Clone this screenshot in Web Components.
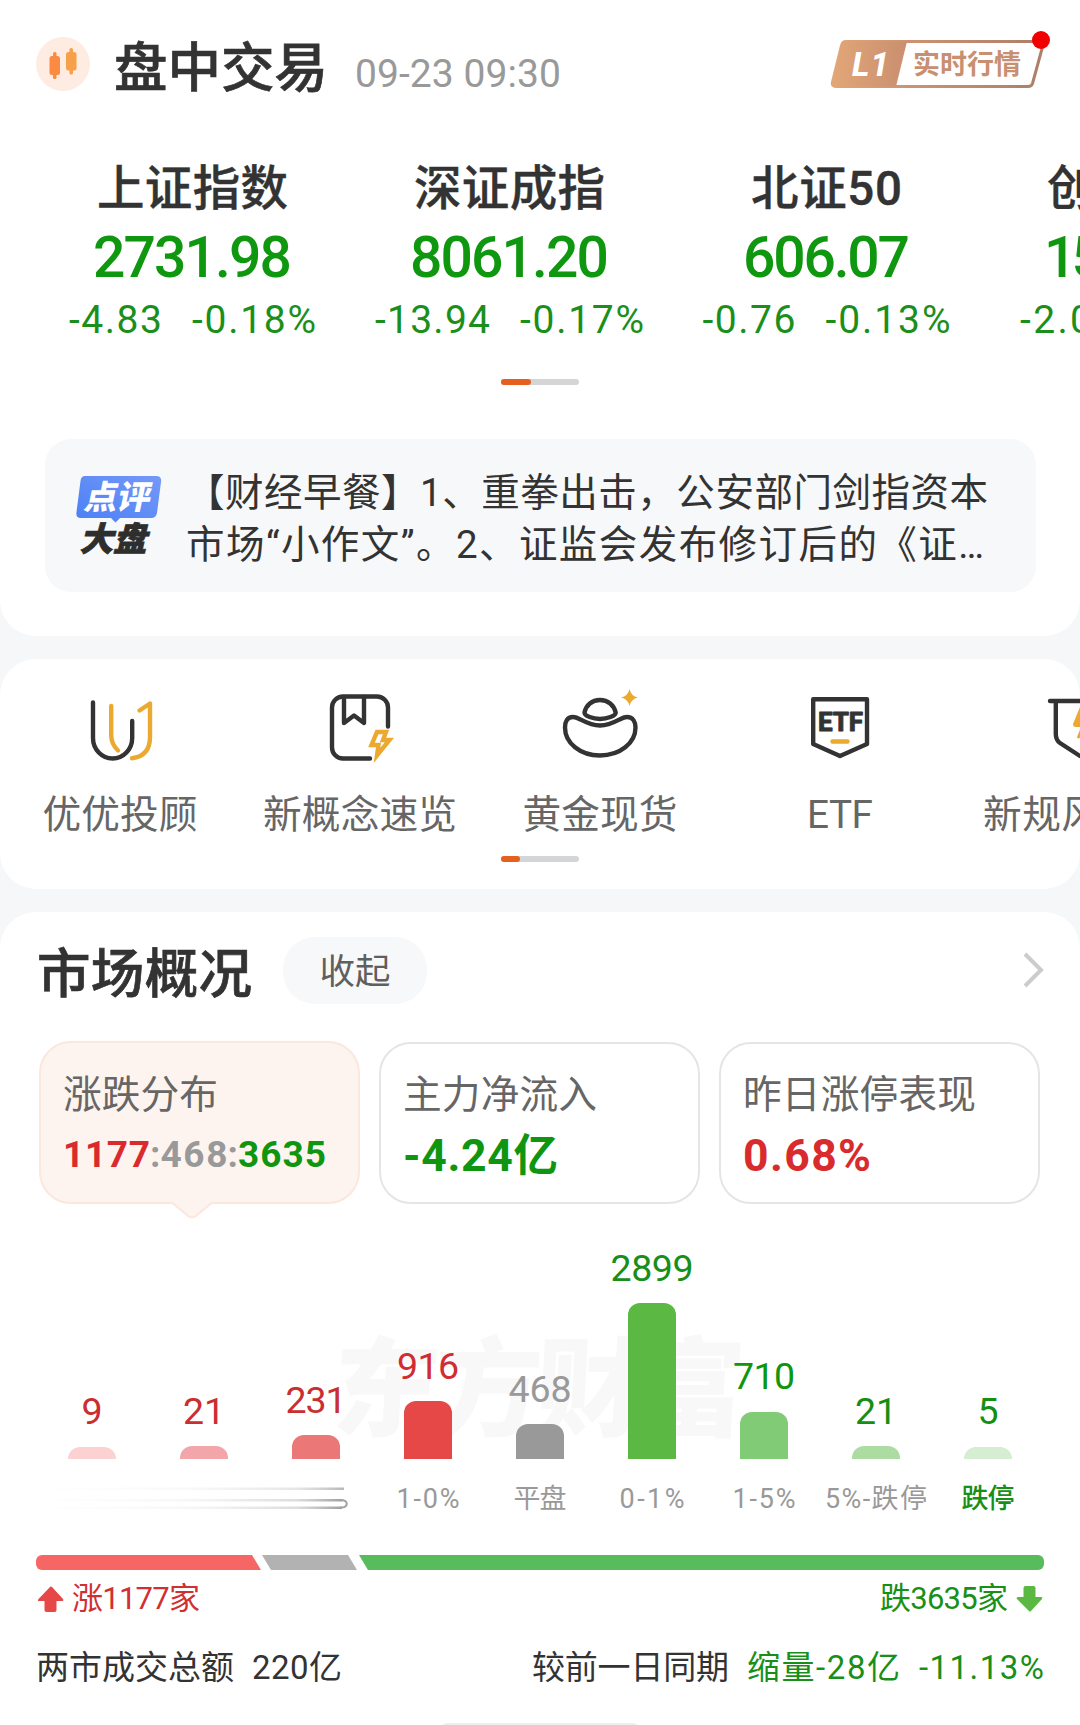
<!DOCTYPE html>
<html lang="zh-CN">
<head>
<meta charset="utf-8">
<title>盘中交易</title>
<style>
  html, body {
    margin: 0;
    padding: 0;
  }

  body {
    width: 1080px;
    height: 1725px;
    overflow: hidden;
    background: #f6f7f9;
    color: #333;
    font-family: Roboto, "Noto Sans CJK SC", sans-serif;
  }
</style>
</head>
<body>
<market-app></market-app>

<script>
// Text spread over a fixed width by letter spacing
class FitText extends HTMLElement {
  constructor() {
    super();

    this.attachShadow({ mode: 'open' });
    this.shadowRoot.innerHTML = `
      <style>
        :host { display: inline-block; white-space: nowrap; text-align: left; }
      </style>
      <slot></slot>
    `;
  }

  connectedCallback() {
    const target = Number(this.getAttribute('w'));
    const count = this.textContent.length;

    if (!target || count < 2) {
      return;
    }

    this.style.width = 'max-content';
    const natural = this.getBoundingClientRect().width;
    this.style.letterSpacing = (target - natural) / (count - 1) + 'px';
    this.style.width = target + 'px';
  }
}

class PanelCard extends HTMLElement {
  constructor() {
    super();

    this.attachShadow({ mode: 'open' });
    this.shadowRoot.innerHTML = `
      <style>
        :host {
          display: block;
          box-sizing: border-box;
          background: #fff;
          border-radius: 36px;
          overflow: hidden;
        }
      </style>
      <slot></slot>
    `;
  }
}

class LevelBadge extends HTMLElement {
  constructor() {
    super();

    this.attachShadow({ mode: 'open' });
    this.shadowRoot.innerHTML = `
      <style>
        :host { display: block; width: 222px; height: 62px; }
        svg { display: block; overflow: visible; }
        text { font-family: Roboto, "Noto Sans CJK SC", sans-serif; }
      </style>
      <svg width="222" height="62" viewBox="0 0 222 62">
        <defs>
          <linearGradient id="copper" x1="0" x2="1" y1="0" y2="0">
            <stop offset="0" stop-color="#e2a678"/>
            <stop offset=".4" stop-color="#cb9170"/>
            <stop offset="1" stop-color="#ac7f6a"/>
          </linearGradient>
          <linearGradient id="plate" x1="0" x2="1" y1="0" y2="0">
            <stop offset="0" stop-color="#e2a678"/>
            <stop offset="1" stop-color="#c98f6f"/>
          </linearGradient>
        </defs>
        <path d="M18 11.5H216L204.500 53.500Q203.500 56.500 200 56.500H8Q3.500 56.500 4.500 52L13.500 15.500Q14.500 11.500 18 11.500Z" fill="#fff" stroke="url(#copper)" stroke-width="3"/>
        <path d="M18 11.500H79L68 56.500H8Q3.500 56.500 4.500 52L13.500 15.500Q14.500 11.500 18 11.500Z" fill="url(#plate)"/>
        <text x="24" y="46" font-size="33" font-weight="800" font-style="italic" fill="#fff" textLength="37">L1</text>
        <text x="85" y="44" font-size="27" font-weight="700" fill="#c88f70" textLength="108">实时行情</text>
        <circle cx="213" cy="10" r="9" fill="#f00000"/>
      </svg>
    `;
  }
}

class MarketHeader extends HTMLElement {
  constructor() {
    super();

    this.attachShadow({ mode: 'open' });
    this.shadowRoot.innerHTML = `
      <style>
        :host {
          display: flex;
          align-items: baseline;
          height: 64px;
          padding: 37px 30px 0 36px;
        }
        .logo { align-self: flex-start; display: block; }
        .title {
          margin-left: 24px;
          font-size: 53.5px;
          line-height: 64px;
          font-weight: 500;
          -webkit-text-stroke: .7px #333;
        }
        .time {
          margin-left: 27px;
          font-size: 39px;
          color: #999;
        }
        level-badge { align-self: flex-start; margin: -7px 0 0 auto; }
      </style>
      <svg class="logo" width="54" height="54" viewBox="0 0 54 54">
        <circle cx="27" cy="27" r="27" fill="#feebe1"/>
        <g fill="#fb8b43">
          <rect x="13.500" y="19" width="10.500" height="19" rx="2.500"/>
          <rect x="17" y="15" width="3.500" height="27" rx="1.500"/>
        </g>
        <g fill="#f6a04a">
          <rect x="30" y="15" width="10.500" height="18.500" rx="2.500"/>
          <rect x="33.500" y="11" width="3.500" height="26.500" rx="1.500"/>
        </g>
      </svg>
      <fit-text class="title" w="214">盘中交易</fit-text>
      <fit-text class="time" w="206">09-23 09:30</fit-text>
      <level-badge></level-badge>
    `;
  }
}

class IndexQuote extends HTMLElement {
  constructor() {
    super();

    const w = this.getAttribute('widths').split(' ');

    this.attachShadow({ mode: 'open' });
    this.shadowRoot.innerHTML = `
      <style>
        :host {
          display: flex;
          flex: 0 0 317px;
          flex-direction: column;
          align-items: center;
        }
        :host([cut]) { align-items: flex-start; }
        .name {
          font-size: 47.5px;
          line-height: 60px;
          font-weight: 500;
          -webkit-text-stroke: .4px #333;
        }
        .price {
          margin-top: 7px;
          font-size: 57px;
          line-height: 64px;
          font-weight: 500;
          color: #0f970f;
        }
        .change {
          display: flex;
          gap: 30px;
          margin-top: 7px;
          font-size: 39px;
          line-height: 46px;
          color: #1b8f1b;
        }
        :host([cut]) .name { margin-left: 62px; }
        :host([cut]) .price { margin-left: 59px; }
        :host([cut]) .change { margin-left: 35px; }
      </style>
      <fit-text class="name" w="${w[0]}">${this.getAttribute('name')}</fit-text>
      <fit-text class="price" w="${w[1]}">${this.getAttribute('price')}</fit-text>
      <div class="change">
        <fit-text w="${w[2]}">${this.getAttribute('change')}</fit-text>
        ${w[3] ? `<fit-text w="${w[3]}">${this.getAttribute('percent')}</fit-text>` : ''}
      </div>
    `;
  }
}

class ScrollHint extends HTMLElement {
  constructor() {
    super();

    this.attachShadow({ mode: 'open' });
    this.shadowRoot.innerHTML = `
      <style>
        :host {
          display: block;
          width: 78px;
          height: 6px;
          margin: 0 auto;
          border-radius: 3px;
          background: #d3d5d7;
        }
        div {
          width: ${this.getAttribute('thumb')}px;
          height: 6px;
          border-radius: 3px;
          background: #e5601f;
        }
      </style>
      <div></div>
    `;
  }
}

class NewsCard extends HTMLElement {
  constructor() {
    super();

    this.attachShadow({ mode: 'open' });
    this.shadowRoot.innerHTML = `
      <style>
        :host {
          display: flex;
          box-sizing: border-box;
          height: 153px;
          margin: 54px 44px 0 45px;
          padding: 28px 0 0 27px;
          border-radius: 26px;
          background: #f7f8fa;
        }
        svg { display: block; margin-top: 5px; overflow: visible; }
        text { font-family: "Noto Sans CJK SC", sans-serif; font-weight: 900; }
        .lines {
          display: flex;
          flex-direction: column;
          align-items: flex-start;
          margin-left: 24px;
          font-size: 38.5px;
          line-height: 52px;
        }
      </style>
      <svg width="90" height="86" viewBox="0 0 90 86">
        <defs>
          <linearGradient id="blue" x1="0" y1="1" x2="1" y2="0">
            <stop offset="0" stop-color="#4b80f5"/>
            <stop offset="1" stop-color="#7499f8"/>
          </linearGradient>
        </defs>
        <path d="M13 4H84Q90 4 89 10L85 41Q84 46 79 46H48L43.500 50.500 39 46H9Q3.500 46 4.500 40L8.500 9Q9 4 13 4Z" fill="url(#blue)"/>
        <text transform="translate(11 37) skewX(-12)" font-size="33" fill="#fff" textLength="66">点评</text>
        <text transform="translate(7.500 79) skewX(-14)" font-size="33.500" fill="#2e2e2e" stroke="#2e2e2e" stroke-width=".8" textLength="67">大盘</text>
      </svg>
      <div class="lines">
        <fit-text w="802">【财经早餐】1、重拳出击，公安部门剑指资本</fit-text>
        <fit-text w="798">市场“小作文”。2、证监会发布修订后的《证…</fit-text>
      </div>
    `;
  }
}

class QuickEntry extends HTMLElement {
  constructor() {
    super();

    this.attachShadow({ mode: 'open' });
    this.shadowRoot.innerHTML = `
      <style>
        :host {
          display: flex;
          flex: 0 0 240px;
          flex-direction: column;
          align-items: center;
        }
        :host([cut]) .label { align-self: flex-start; margin-left: 23px; }
        .label {
          margin-top: 22px;
          font-size: 38.7px;
          line-height: 46px;
          color: #666;
        }
      </style>
      <slot></slot>
      <fit-text class="label" w="${this.getAttribute('w')}">${this.getAttribute('label')}</fit-text>
    `;
  }
}

class StatCard extends HTMLElement {
  constructor() {
    super();

    this.attachShadow({ mode: 'open' });
    this.shadowRoot.innerHTML = `
      <style>
        :host {
          display: block;
          position: relative;
          box-sizing: border-box;
          flex: 1;
          height: 162px;
          margin-top: 1px;
          padding: 28px 0 0 22px;
          border: 2px solid #e5e5e5;
          border-radius: 32px;
          font-size: 44.5px;
          line-height: 46px;
          font-weight: 700;
        }
        .label {
          display: block;
          margin-bottom: 15px;
          font-size: 38.7px;
          font-weight: 400;
          color: #666;
        }
        svg { display: none; }
        :host([active]) {
          height: 163px;
          margin-top: 0;
          padding-top: 29px;
          border-color: #fbe7dd;
          background: #fef4ef;
          font-size: 37px;
        }
        :host([active]) .label { margin-bottom: 14px; }
        :host([active]) svg {
          display: block;
          position: absolute;
          left: 129px;
          top: 159px;
        }
      </style>
      <fit-text class="label" w="${this.getAttribute('w')}">${this.getAttribute('label')}</fit-text>
      <slot></slot>
      <svg width="44" height="18" viewBox="0 0 44 18">
        <path d="M0 0L3 1 18 14Q22 17 26 14L41 1 44 0Z" fill="#fef4ef"/>
        <path d="M1 1Q3 1 5 3L18 14Q22 17 26 14L39 3Q41 1 43 1" fill="none" stroke="#fbe7dd" stroke-width="2"/>
      </svg>
    `;
  }
}

const bars = [
  { value: '9', h: 12.5, color: '#fbd1d2', text: '#c92e31', label: '' },
  { value: '21', h: 13, color: '#f3a6a9', text: '#c92e31', label: '' },
  { value: '231', w: 61, h: 24, color: '#eb7777', text: '#c92e31', label: '' },
  { value: '916', w: 62, h: 58, color: '#e64848', text: '#d12c2f', label: '1-0%', lw: 63 },
  { value: '468', w: 63, h: 35, color: '#999', text: '#999', label: '平盘', lw: 53 },
  { value: '2899', w: 83, h: 156, color: '#5bb943', text: '#188f18', label: '0-1%', lw: 65 },
  { value: '710', w: 62, h: 47.5, color: '#82cb76', text: '#0e960e', label: '1-5%', lw: 63 },
  { value: '21', h: 13, color: '#addca3', text: '#148f14', label: '5%-跌停', lw: 102 },
  { value: '5', h: 12.5, color: '#d5edd0', text: '#148f14', label: '跌停', lw: 53, hot: true }
];

class DistChart extends HTMLElement {
  constructor() {
    super();

    this.attachShadow({ mode: 'open' });
    this.shadowRoot.innerHTML = `
      <style>
        :host { display: block; position: relative; margin: 0 36px; }
        .grid { position: relative; display: grid; grid-template-columns: repeat(9, 112px); }
        .col {
          display: flex;
          flex-direction: column;
          align-items: center;
          justify-content: flex-end;
          height: 255px;
        }
        .value { margin-bottom: 17.5px; font-size: 37.5px; line-height: 36px; }
        .bar { width: 48px; border-radius: 12px 12px 0 0; }
        .axis {
          height: 34px;
          margin-top: 23px;
          text-align: center;
          font-size: 27px;
          line-height: 34px;
          color: #999;
        }
        .hot { color: #188f18; font-weight: 500; }
        .watermark, .streak { position: absolute; overflow: visible; }
        .watermark { left: 290px; top: 128px; }
        .watermark text { font-family: "Noto Sans CJK SC", sans-serif; font-weight: 900; }
        .streak { left: 0; top: 278px; }
      </style>
      <svg class="watermark" width="420" height="112">
        <text transform="translate(5 96) skewX(-3)" font-size="108" fill="#f8f8f8" textLength="412">东方财富</text>
      </svg>
      <div class="grid">
        ${bars.map(b => `
          <div class="col">
            <fit-text class="value" w="${b.w || ''}" style="color:${b.text}">${b.value}</fit-text>
            <div class="bar" style="height:${b.h}px;background:${b.color}"></div>
          </div>`).join('')}
        ${bars.map(b => `
          <div class="axis ${b.hot ? 'hot' : ''}">${b.label ? `<fit-text w="${b.lw}">${b.label}</fit-text>` : ''}</div>`).join('')}
      </div>
      <svg class="streak" width="316" height="34" viewBox="0 0 316 34">
        <defs>
          <linearGradient id="fade" x1="0" x2="1" y1="0" y2="0">
            <stop offset="0" stop-color="#ccc" stop-opacity="0"/>
            <stop offset=".5" stop-color="#bbb" stop-opacity=".12"/>
            <stop offset=".85" stop-color="#aaa" stop-opacity=".4"/>
            <stop offset="1" stop-color="#888" stop-opacity=".8"/>
          </linearGradient>
        </defs>
        <rect x="0" y="5.500" width="308" height="2.500" fill="url(#fade)" opacity=".75"/>
        <rect x="0" y="17" width="306" height="2.500" fill="url(#fade)"/>
        <rect x="0" y="24.500" width="306" height="2.500" fill="url(#fade)"/>
        <path d="M304 18C313 18 313 25.700 304 25.700" fill="none" stroke="#a2a2a2" stroke-width="2"/>
      </svg>
    `;
  }
}

class RatioBar extends HTMLElement {
  constructor() {
    super();

    this.attachShadow({ mode: 'open' });
    this.shadowRoot.innerHTML = `
      <style>
        :host { display: block; margin: 39px 36px 0; }
        .track { display: flex; height: 15px; border-radius: 6px; overflow: hidden; }
        .up { width: 225px; background: #f66664; clip-path: polygon(0 0, 216px 0, 100% 100%, 0 100%); }
        .flat { width: 95px; margin-left: 1px; background: #b2b2b2; clip-path: polygon(0 0, 86px 0, 100% 100%, 9px 100%); }
        .down { flex: 1; margin-left: 2px; background: #58bb5c; clip-path: polygon(0 0, 100% 0, 100% 100%, 9px 100%); }
        .legend {
          display: flex;
          align-items: center;
          height: 38px;
          margin-top: 10px;
          font-size: 31px;
          line-height: 38px;
        }
        .rise { margin-left: 8px; color: #cf3032; }
        .fall { margin: 0 8px 0 auto; color: #189018; }
      </style>
      <div class="track"><div class="up"></div><div class="flat"></div><div class="down"></div></div>
      <div class="legend">
        <svg width="28" height="28" viewBox="0 0 28 28"><path d="M14 2Q15 1 16 2L27 14Q28 16 26 16H20.500V25Q20.500 27 18.500 27H10.500Q8.500 27 8.500 25V16H3Q1 16 2.500 14Z" fill="#e54847"/></svg>
        <fit-text class="rise" w="128">涨1177家</fit-text>
        <fit-text class="fall" w="128">跌3635家</fit-text>
        <svg width="28" height="28" viewBox="0 0 28 28"><path d="M13 26Q14 27 15 26L26 14Q27 12 25 12H19.500V3Q19.500 1 17.500 1H9.500Q7.500 1 7.500 3V12H2Q0 12 1 14Z" fill="#5bb943"/></svg>
      </div>
    `;
  }
}

class MarketApp extends HTMLElement {
  constructor() {
    super();

    this.attachShadow({ mode: 'open' });
    this.shadowRoot.innerHTML = `
      <style>
        :host { display: flex; flex-direction: column; gap: 23px; height: 1725px; overflow: hidden; }
        panel-card { flex: none; }
        .indices { height: 636px; border-radius: 0 0 36px 36px; }
        .entries { height: 230px; }
        .overview { height: 813px; border-radius: 36px 36px 0 0; }
        .quotes { display: flex; margin: 58px 0 36px 34px; }
        .icons { display: flex; margin: 31px 0 18px; }
        .icons svg { display: block; overflow: visible; fill: none; stroke: #333; stroke-width: 4.4; stroke-linecap: round; stroke-linejoin: round; }
        .icons .gold { stroke: #eba92f; }
        .icons .fill { fill: #eba92f; stroke: none; }
        .icons text { fill: #333; stroke: #333; stroke-width: .8; font-family: Roboto, sans-serif; font-weight: 800; font-size: 26px; }
        .head { display: flex; height: 67px; padding: 25px 36px 0 37px; }
        .head .title {
          padding-top: 4px;
          font-size: 53.5px;
          line-height: 67px;
          font-weight: 500;
          -webkit-text-stroke: .7px #333;
        }
        .fold {
          width: 144px;
          height: 67px;
          margin-left: 31px;
          border-radius: 32px;
          background: #f7f8fa;
          text-align: center;
          font-size: 35.5px;
          line-height: 71px;
          color: #5f5f5f;
        }
        .head svg { margin: 14px 0 0 auto; }
        .stats { display: flex; gap: 19px; margin: 37px 40px 0 39px; height: 163px; }
        .score { display: flex; }
        .red { color: #d92b2d; }
        .gray { color: #999; }
        .green { color: #109510; }
        .totals { display: flex; margin: 29px 36px 0 36px; font-size: 33px; line-height: 42px; }
        .totals .green { color: #188f18; }
        .home { width: 198px; height: 6px; margin: 34px auto 0; border-radius: 6px 6px 0 0; background: #eee; }
      </style>

      <panel-card class="indices">
        <market-header></market-header>
        <div class="quotes">
          <index-quote name="上证指数" price="2731.98" change="-4.83" percent="-0.18%" widths="191 199 93 124"></index-quote>
          <index-quote name="深证成指" price="8061.20" change="-13.94" percent="-0.17%" widths="191 199 115 124"></index-quote>
          <index-quote name="北证50" price="606.07" change="-0.76" percent="-0.13%" widths="151 167 93 125"></index-quote>
          <index-quote cut name="创" price="15" change="-2.0" widths="48 60 72"></index-quote>
        </div>
        <scroll-hint thumb="30"></scroll-hint>
        <news-card></news-card>
      </panel-card>

      <panel-card class="entries">
        <div class="icons">
          <quick-entry label="优优投顾" w="155">
            <svg width="80" height="80" viewBox="0 0 80 80">
              <path d="M13 12.500V48a19.600 20.500 0 0 0 39.200 0V31"/>
              <path class="gold" d="M31.200 16V45Q31.200 54 38 60.500M59.500 20.500L70 13.500V47Q70 66 52 68.300"/>
            </svg>
          </quick-entry>
          <quick-entry label="新概念速览" w="194">
            <svg width="80" height="80" viewBox="0 0 80 80">
              <path d="M68 36.500V17.500a11 11 0 0 0-11-11H23a11 11 0 0 0-11 11V57.500a11 11 0 0 0 11 11H50"/>
              <path d="M24 7V33L34 25.500 44 33V7"/>
              <path class="gold" stroke-linejoin="miter" d="M57 42H66L63 50H69.500L57 65.500 58.500 55H51.500Z"/>
            </svg>
          </quick-entry>
          <quick-entry label="黄金现货" w="155">
            <svg width="80" height="80" viewBox="0 0 80 80">
              <path d="M40 35.500C26 35.500 20 27 13 27C7 27 5 32 5 37.500C5 53 20 65.500 40 65.500S75.500 53 75.500 37.500C75.500 32 73 27 67 27C60 27 54 35.500 40 35.500Z"/>
              <path d="M24.500 22.500C26 15 32 10 40 10S54 15 55.700 22.500C55.700 26 47 29 40 29S24.500 26 24.500 22.500Z"/>
              <path class="fill" d="M69.500-1Q71 6 78 7.500 71 9 69.500 16 68 9 61 7.500 68 6 69.500-1Z"/>
            </svg>
          </quick-entry>
          <quick-entry label="ETF" w="66">
            <svg width="80" height="80" viewBox="0 0 80 80">
              <path d="M13.200 9.200H67V54L40 66 13.200 54Z"/>
              <text x="18" y="41" textLength="45">ETF</text>
              <path class="gold" d="M32.500 51.500H47.500"/>
            </svg>
          </quick-entry>
          <quick-entry cut label="新规风" w="117">
            <svg width="80" height="80" viewBox="0 0 80 80">
              <path d="M10 11H70M15.800 11V44Q15.800 50 20 53L40 66 60 53Q64 50 64 44V11"/>
              <path class="fill" d="M42 12L33 34Q33 37 36 37H41L37 47Q38 50 41 47L54 29H45L49 12Z"/>
            </svg>
          </quick-entry>
        </div>
        <scroll-hint thumb="19"></scroll-hint>
      </panel-card>

      <panel-card class="overview">
        <div class="head">
          <fit-text class="title" w="215">市场概况</fit-text>
          <div class="fold">收起</div>
          <svg width="22" height="38" viewBox="0 0 22 38"><path d="M3 3L19 19 3 35" fill="none" stroke="#ccc" stroke-width="4"/></svg>
        </div>
        <div class="stats">
          <stat-card active label="涨跌分布" w="155">
            <div class="score">
              <fit-text class="red" w="87">1177</fit-text><span class="gray">:</span><fit-text class="gray" w="67">468</fit-text><span class="gray">:</span><fit-text class="green" w="88">3635</fit-text>
            </div>
          </stat-card>
          <stat-card label="主力净流入" w="194"><fit-text class="green" w="155">-4.24亿</fit-text></stat-card>
          <stat-card label="昨日涨停表现" w="233"><fit-text class="red" w="128">0.68%</fit-text></stat-card>
        </div>
        <dist-chart></dist-chart>
        <ratio-bar></ratio-bar>
        <div class="totals">
          <fit-text w="198">两市成交总额</fit-text>
          <fit-text w="90" style="margin-left:18px">220亿</fit-text>
          <fit-text w="197" style="margin-left:auto">较前一日同期</fit-text>
          <fit-text class="green" w="153" style="margin-left:18px">缩量-28亿</fit-text>
          <fit-text class="green" w="125" style="margin-left:19px">-11.13%</fit-text>
        </div>
        <div class="home"></div>
      </panel-card>
    `;
  }
}

window.customElements.define('panel-card', PanelCard);
window.customElements.define('level-badge', LevelBadge);
window.customElements.define('market-header', MarketHeader);
window.customElements.define('scroll-hint', ScrollHint);
window.customElements.define('news-card', NewsCard);
window.customElements.define('dist-chart', DistChart);
window.customElements.define('ratio-bar', RatioBar);
window.customElements.define('market-app', MarketApp);
window.customElements.define('index-quote', IndexQuote);
window.customElements.define('quick-entry', QuickEntry);
window.customElements.define('stat-card', StatCard);
// last, so that the text is measured with its final styles
window.customElements.define('fit-text', FitText);
</script>
</body>
</html>
